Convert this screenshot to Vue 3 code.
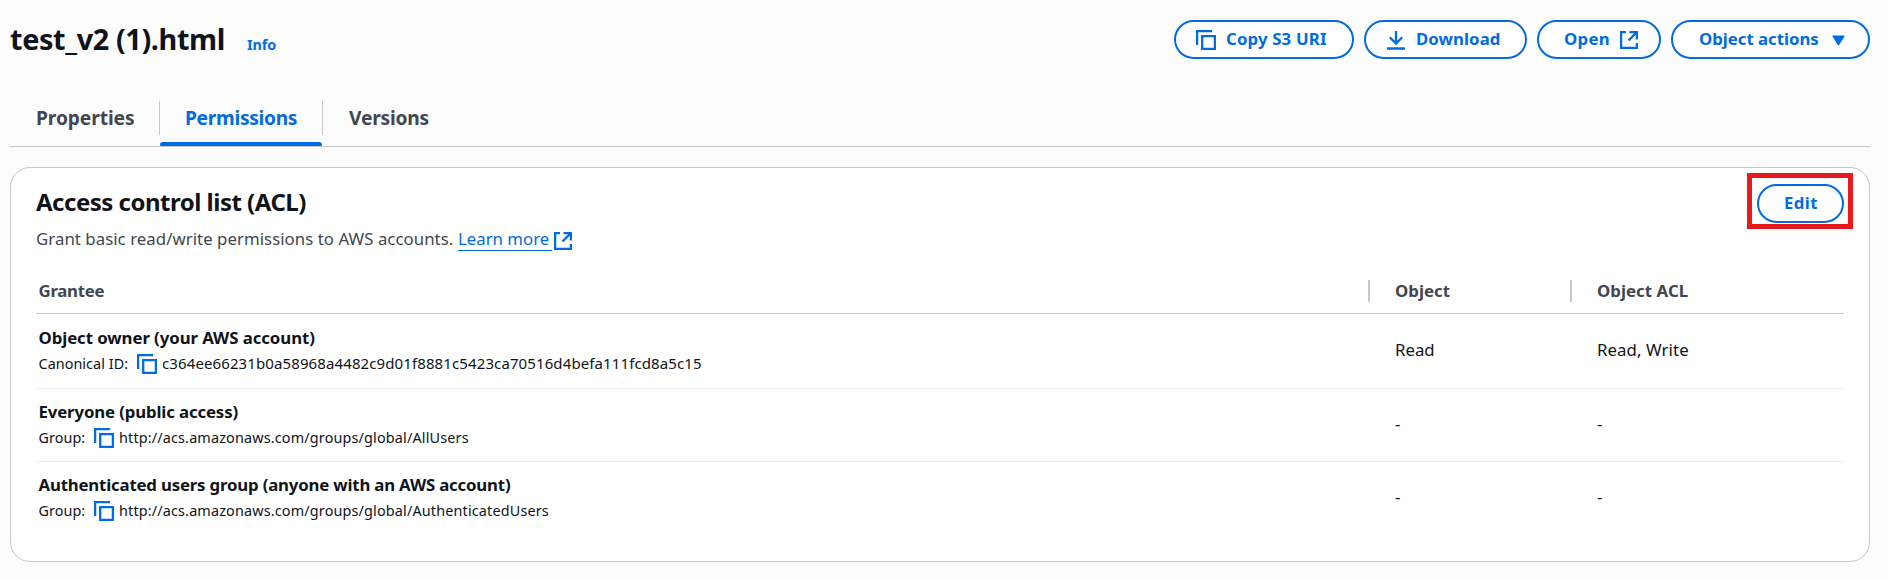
<script setup>
import { h } from 'vue'

const CopyIcon = () =>
  h('svg', { width: 20, height: 20, viewBox: '0 0 20 20', fill: 'none', stroke: '#006ce0', 'stroke-width': 2.3 }, [
    h('path', { d: 'M1.100 15V1.100h15' }),
    h('path', { d: 'M6.200 6.200h12.700v12.700H6.200z' }),
  ])

const ExternalIcon = () =>
  h('svg', { width: 18, height: 18, viewBox: '0 0 18 18', fill: 'none', stroke: '#006ce0', 'stroke-width': 2.3 }, [
    h('path', { d: 'M6 1.100H1.100v15.800h15.800v-5' }),
    h('path', { d: 'M9.500 1.100H16.900v7.400M16.900 1.100L8.500 9.500' }),
  ])

const tabs = [
  { label: 'Properties', key: 'properties' },
  { label: 'Permissions', key: 'permissions', active: true },
  { label: 'Versions', key: 'versions' },
]

const rows = [
  {
    key: 'owner',
    name: 'Object owner (your AWS account)',
    label: 'Canonical ID:',
    value: 'c364ee66231b0a58968a4482c9d01f8881c5423ca70516d4befa111fcd8a5c15',
    object: 'Read',
    acl: 'Read, Write',
  },
  {
    key: 'everyone',
    name: 'Everyone (public access)',
    label: 'Group:',
    value: 'http://acs.amazonaws.com/groups/global/AllUsers',
    object: '-',
    acl: '-',
  },
  {
    key: 'authenticated',
    name: 'Authenticated users group (anyone with an AWS account)',
    label: 'Group:',
    value: 'http://acs.amazonaws.com/groups/global/AuthenticatedUsers',
    object: '-',
    acl: '-',
  },
]
</script>

<template>
  <main class="page">
    <header class="header">
      <div class="heading">
        <h1>test_v2 (1).html</h1>
        <a class="info">Info</a>
      </div>
      <div class="actions">
        <button class="btn copy"><CopyIcon /><span>Copy S3 URI</span></button>
        <button class="btn download">
          <svg width="18" height="19" viewBox="0 0 18 19" fill="none" stroke="#006ce0" stroke-width="2.300">
            <path d="M9 0v13M2.800 6.300L9 12.500l6.200-6.200M0 17.500h18" />
          </svg>
          <span>Download</span>
        </button>
        <button class="btn open"><span>Open</span><ExternalIcon /></button>
        <button class="btn menu">
          <span>Object actions</span>
          <svg width="13" height="11" viewBox="0 0 13 11" fill="#006ce0">
            <path d="M1 .5h11q1 0 .5 1L7.300 9.800q-.8 1-1.600 0L.5 1.500Q0 .5 1 .5z" />
          </svg>
        </button>
      </div>
    </header>

    <nav class="tabs">
      <div v-for="tab in tabs" :key="tab.key" class="tab" :class="[tab.key, { active: tab.active }]">
        <span>{{ tab.label }}</span>
      </div>
    </nav>

    <section class="card">
      <div class="card-head">
        <div>
          <h2>Access control list (ACL)</h2>
          <p class="desc">
            <span class="desc-text">Grant basic read/write permissions to AWS accounts.</span>
            <a class="learn">Learn more</a>
            <ExternalIcon />
          </p>
        </div>
        <div class="highlight"><button class="btn edit">Edit</button></div>
      </div>

      <div class="table">
        <div class="row head">
          <div class="grantee">Grantee</div>
          <div class="cell divided">Object</div>
          <div class="cell divided acl">Object ACL</div>
        </div>
        <div v-for="row in rows" :key="row.key" class="row body" :class="row.key">
          <div class="grantee">
            <div class="name">{{ row.name }}</div>
            <div class="sub">
              <span class="label">{{ row.label }}</span>
              <CopyIcon />
              <span class="value">{{ row.value }}</span>
            </div>
          </div>
          <div class="cell">{{ row.object }}</div>
          <div class="cell acl">{{ row.acl }}</div>
        </div>
      </div>
    </section>
  </main>
</template>

<style>
body {
  background: #fcfcfd;
}
</style>

<style scoped>
.page {
  box-sizing: border-box;
  height: 580px;
  padding: 20px 18px 0 10px;
  background: #fcfcfd;
  color: #0f141a;
  font-family: "Noto Sans", "Open Sans", sans-serif;
  font-size: 16.8px;
  white-space: nowrap;
}
h1, h2, p { margin: 0; }
svg { display: block; flex: none; }

.header {
  display: flex;
  justify-content: space-between;
  height: 39px;
}
.heading { display: flex; align-items: baseline; }
h1 {
  width: 237px;
  font-size: 28.8px;
  line-height: 38px;
  font-weight: 700;
  letter-spacing: -0.37px;
}
.info { color: #006ce0; font-size: 14.4px; font-weight: 700; letter-spacing: -0.1px; }

.actions { display: flex; gap: 10px; }
.btn {
  box-sizing: border-box;
  display: flex;
  align-items: center;
  height: 39px;
  padding: 0 0 0 25px;
  border: 2px solid #006ce0;
  border-radius: 20px;
  background: #fff;
  color: #006ce0;
  font: 700 16.8px/33px "Noto Sans", "Open Sans", sans-serif;
}
.btn span { padding-bottom: 2px; }
.copy { width: 180px; padding-left: 20px; letter-spacing: 0.15px; }
.copy span { margin-left: 10px; }
.download { width: 163px; padding-left: 21px; letter-spacing: 0.08px; }
.download span { margin-left: 11px; }
.download svg { margin-top: 2px; }
.open { width: 124px; letter-spacing: 0.25px; }
.open svg { margin-left: 10px; margin-top: 1px; }
.menu { width: 199px; padding-left: 26px; letter-spacing: -0.02px; }
.menu svg { margin-left: 13px; margin-top: 1px; }

.tabs {
  display: flex;
  height: 46px;
  margin-top: 41px;
  border-bottom: 1px solid #c6c6cd;
  color: #424650;
  font-size: 19.2px;
  font-weight: 700;
}
.tab { box-sizing: border-box; height: 46px; letter-spacing: -0.2px; }
.tab span {
  box-sizing: border-box;
  display: block;
  height: 34px;
  margin-top: 1px;
  padding-left: 26px;
  line-height: 33px;
}
.properties { width: 150px; letter-spacing: -0.1px; }
.properties span, .permissions span { border-right: 1px solid #c6c6cd; }
.permissions { width: 163px; letter-spacing: -0.3px; }
.permissions span { padding-left: 25px; }
.active { color: #006ce0; }
.active::after {
  content: "";
  display: block;
  width: 162px;
  height: 4px;
  margin-top: 7px;
  border-radius: 3px 3px 1px 1px;
  background: #006ce0;
}

.card {
  box-sizing: border-box;
  height: 395px;
  margin-top: 20px;
  padding: 0 25px;
  border: 1px solid #c6c6cd;
  border-radius: 20px;
  background: #fff;
}
.card-head { display: flex; justify-content: space-between; height: 102px; }
h2 {
  margin-top: 19px;
  font-size: 24px;
  line-height: 30px;
  font-weight: 700;
  letter-spacing: -0.5px;
}
.desc {
  display: flex;
  height: 26px;
  margin-top: 10px;
  color: #424650;
  line-height: 24px;
}
.desc-text { width: 422px; letter-spacing: 0.05px; }
.learn {
  box-sizing: border-box;
  width: 94px;
  height: 24px;
  border-bottom: 1px solid #006ce0;
  color: #006ce0;
}
.desc svg { margin: 5px 0 0 2px; }
.highlight {
  box-sizing: border-box;
  width: 106px;
  height: 56px;
  margin: 5px -9px 0 0;
  padding: 6px 0 0 5px;
  border: 5px solid #e8191a;
}
.edit { width: 87px; padding-bottom: 2px; letter-spacing: 0.4px; }

.row { display: flex; align-items: center; box-sizing: border-box; }
.head {
  height: 44px;
  padding-bottom: 1px;
  border-bottom: 1px solid #c6c6cd;
  color: #424650;
  font-weight: 700;
}
.head .grantee { line-height: 22px; letter-spacing: -0.25px; }
.grantee { box-sizing: border-box; width: 1332px; padding-left: 2.500px; }
.cell { box-sizing: border-box; width: 202px; padding-left: 27px; }
.acl { letter-spacing: 0.09px; }
.divided {
  height: 22px;
  padding-left: 25px;
  border-left: 2px solid #c6c6cd;
  line-height: 21px;
  letter-spacing: 0.05px;
}
.body { height: 73px; border-bottom: 1px solid #ebebf0; }
.body.owner { height: 75px; }
.body.authenticated { border-bottom-color: transparent; }
.body .cell { padding-bottom: 3px; }
.name { height: 25px; line-height: 23px; font-weight: 700; letter-spacing: -0.07px; }
.everyone .name { letter-spacing: -0.13px; }
.authenticated .name { letter-spacing: -0.175px; }
.sub { display: flex; height: 25px; font-size: 14.4px; line-height: 25px; }
.label { width: 55.500px; letter-spacing: 0.05px; }
.owner .label { width: 98.500px; letter-spacing: 0.04px; }
.sub svg { margin-top: 3px; }
.value { margin-left: 5px; letter-spacing: 0.155px; }
.owner .value { font-size: 15px; letter-spacing: 0.11px; }
</style>
